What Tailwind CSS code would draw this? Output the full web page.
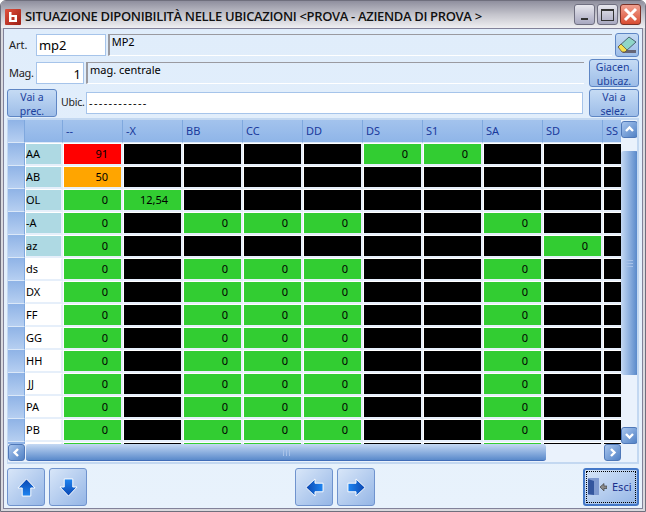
<!DOCTYPE html>
<html><head><meta charset="utf-8"><title>Situazione</title>
<script src="https://cdn.jsdelivr.net/npm/@tailwindcss/browser@4"></script></head>
<body class="m-0 overflow-hidden bg-white">
<div class="w-[646px] h-[512px] flex flex-col bg-[#d9d9de] font-['Noto_Sans',sans-serif] text-[11px] text-black rounded-t-[6px] overflow-hidden border border-[#6f6f7d]">
  <!-- title bar -->
  <div class="h-[27px] shrink-0 flex items-center pl-[4px] pr-[3px] pt-[4px] bg-gradient-to-b from-[#8f8f9e] via-[#c4c4cc] to-[#efeff2]">
    <div class="w-[16px] h-[16px] rounded-[1px] bg-gradient-to-br from-[#e2503c] to-[#9c1c14] flex items-center justify-center shrink-0">
      <svg width="12" height="12" viewBox="0 0 12 12"><path d="M2 1h2.500v3H10v7H2z M4.500 6v3h3V6z" fill="#fff" fill-rule="evenodd"/></svg>
    </div>
    <div class="ml-[4px] font-['Open_Sans',sans-serif] font-semibold text-[13px] tracking-[-0.34px] text-[#111] whitespace-nowrap flex-1">SITUAZIONE DIPONIBILITÀ NELLE UBICAZIONI &lt;PROVA - AZIENDA DI PROVA &gt;</div>
    <div class="flex gap-[2px] mr-[1px] -mt-[4px]">
      <div class="w-[21px] h-[21px] rounded-[3px] border border-[#6f6f80] bg-gradient-to-b from-[#e8e8ee] to-[#a8a8c0] flex items-end justify-center pb-[4px]"><div class="w-[7px] h-[2px] bg-[#333]"></div></div>
      <div class="w-[21px] h-[21px] rounded-[3px] border border-[#6f6f80] bg-gradient-to-b from-[#e8e8ee] to-[#a8a8c0] flex items-center justify-center"><div class="w-[13px] h-[12px] border border-t-2 border-[#333]"></div></div>
      <div class="w-[21px] h-[21px] rounded-[3px] border border-[#7a3228] bg-gradient-to-b from-[#f0a090] to-[#d84a30] flex items-center justify-center">
        <svg width="15" height="15" viewBox="0 0 15 15"><path d="M2 2l11 11M13 2L2 13" stroke="#fff" stroke-width="3"/></svg>
      </div>
    </div>
  </div>
  <!-- client -->
  <div class="flex-1 mx-[2px] mb-[2px] border border-[#82829a] bg-gradient-to-b from-[#e0edfb] to-[#e8f2fc] flex flex-col pl-[3px] pr-[3px] min-h-0">
    <div class="h-[29px] shrink-0 flex items-center pt-[2px]">
      <span class="w-[29px] pl-[2px] text-[#222] mt-[2px]">Art.</span>
      <div class="w-[70px] h-[22px] bg-white border border-[#a6c4ea] text-[13px] pl-[2px] leading-[20px]">mp2</div>
      <div class="w-[506px] ml-[2px] h-[22px] border-l-2 border-t border-[#9a9aa0] border-b border-b-white pl-[2px] leading-[14px]">MP2</div>
      <button class="ml-[3px] w-[24px] h-[24px] rounded-[3px] border border-[#5e86c4] bg-gradient-to-b from-[#c5dbf4] to-[#9dbde8] flex items-center justify-center">
        <svg width="20" height="20" viewBox="0 0 20 20"><path d="M4 15h15v3H6z" fill="#667"/><path d="M1 12L12 2l7 5L9 16z" fill="#8fd6c8" stroke="#234" stroke-width=".7"/><path d="M1 12l3-3 6 6-2 2H5z" fill="#f4e050" stroke="#543" stroke-width=".7"/></svg>
      </button>
    </div>
    <div class="h-[30px] shrink-0 flex items-center">
      <span class="w-[29px] text-[#222] pl-[2px] tracking-[-0.3px]">Mag.</span>
      <div class="w-[48px] h-[22px] bg-white border border-[#a6c4ea] text-[13px] pr-[2px] text-right leading-[22px]">1</div>
      <div class="w-[498px] ml-[2px] h-[22px] border-l-2 border-t border-[#9a9aa0] border-b border-b-white pl-[2px] leading-[14px]">mag. centrale</div>
      <button class="ml-[5px] w-[50px] h-[28px] rounded-[3px] border border-[#5e86c4] bg-gradient-to-b from-[#c5dbf4] to-[#9dbde8] text-[#1c3f9c] text-[10.5px] leading-[14px]">Giacen.<br>ubicaz.</button>
    </div>
    <div class="h-[30px] shrink-0 flex items-center">
      <button class="w-[50px] h-[28px] rounded-[3px] border border-[#5e86c4] bg-gradient-to-b from-[#c5dbf4] to-[#9dbde8] text-[#1c3f9c] text-[10.5px] leading-[14px]">Vai a<br>prec.</button>
      <span class="w-[29px] pl-[4px] text-[#222] text-[10.5px] tracking-[-0.2px]">Ubic.</span>
      <div class="w-[497px] h-[22px] bg-white border border-[#a6c4ea] pl-[2px] leading-[20px] tracking-[1.35px]">------------</div>
      <button class="ml-[6px] w-[50px] h-[28px] rounded-[3px] border border-[#5e86c4] bg-gradient-to-b from-[#c5dbf4] to-[#9dbde8] text-[#1c3f9c] text-[10.5px] leading-[14px]">Vai a<br>selez.</button>
    </div>
    <!-- grid -->
    <div class="h-[346px] w-[632px] shrink-0 border-2 border-[#c3d8f1] border-l-[1px] border-r-[2px] flex bg-[#eaf2fc] overflow-hidden">
      <div class="w-[613px] shrink-0 flex flex-col">
        <div class="h-[324px] shrink-0 overflow-hidden flex">
          <!-- indicator column -->
          <div class="w-[17px] shrink-0 flex flex-col [&>div]:h-[23px] [&>div]:shrink-0 [&>div]:border-r [&>div]:border-b [&>div]:border-r-[#7fa8de] [&>div]:border-b-[#dbe8f8] [&>div]:bg-gradient-to-b [&>div]:from-[#8fb3e6] [&>div]:to-[#b6cff1]">
            <div></div><div></div><div></div><div></div><div></div><div></div><div></div><div></div><div></div><div></div><div></div><div></div><div></div><div></div><div></div>
          </div>
          <div class="w-[638px] shrink-0">
            <!-- header -->
            <div class="grid grid-cols-[38px_repeat(10,60px)] h-[23px] leading-[22px] text-[#1a3a9c] [&>div]:border-r [&>div]:border-r-[#7fa8de] [&>div]:border-b [&>div]:border-b-[#dbe8f8] [&>div]:pl-[3px] [&>div]:bg-gradient-to-b [&>div]:from-[#a3c3ed] [&>div]:to-[#8fb5e8]">
              <div></div><div>--</div><div>-X</div><div>BB</div><div>CC</div><div>DD</div><div>DS</div><div>S1</div><div>SA</div><div>SD</div><div>SS</div>
            </div>
            <!-- rows -->
            <div class="grid grid-cols-[38px_repeat(10,60px)] auto-rows-[23px] leading-[20px] [&>div]:border-t [&>div]:border-l [&>div]:border-t-white [&>div]:border-l-white [&>div]:border-r-2 [&>div]:border-b-2 [&>div]:border-r-[#e6effa] [&>div]:border-b-[#e6effa] [&>div]:text-right [&>div]:pr-[13px]">
              <div class="bg-[#aed9e3] !text-left !pr-0">AA</div><div class="bg-[#ff0000]">91</div><div class="bg-black"></div><div class="bg-black"></div><div class="bg-black"></div><div class="bg-black"></div><div class="bg-[#32cd32]">0</div><div class="bg-[#32cd32]">0</div><div class="bg-black"></div><div class="bg-black"></div><div class="bg-black"></div>
              <div class="bg-[#aed9e3] !text-left !pr-0">AB</div><div class="bg-[#ffa500]">50</div><div class="bg-black"></div><div class="bg-black"></div><div class="bg-black"></div><div class="bg-black"></div><div class="bg-black"></div><div class="bg-black"></div><div class="bg-black"></div><div class="bg-black"></div><div class="bg-black"></div>
              <div class="bg-[#aed9e3] !text-left !pr-0">OL</div><div class="bg-[#32cd32]">0</div><div class="bg-[#32cd32]">12,54</div><div class="bg-black"></div><div class="bg-black"></div><div class="bg-black"></div><div class="bg-black"></div><div class="bg-black"></div><div class="bg-black"></div><div class="bg-black"></div><div class="bg-black"></div>
              <div class="bg-[#aed9e3] !text-left !pr-0">-A</div><div class="bg-[#32cd32]">0</div><div class="bg-black"></div><div class="bg-[#32cd32]">0</div><div class="bg-[#32cd32]">0</div><div class="bg-[#32cd32]">0</div><div class="bg-black"></div><div class="bg-black"></div><div class="bg-[#32cd32]">0</div><div class="bg-black"></div><div class="bg-black"></div>
              <div class="bg-[#aed9e3] !text-left !pr-0">az</div><div class="bg-[#32cd32]">0</div><div class="bg-black"></div><div class="bg-black"></div><div class="bg-black"></div><div class="bg-black"></div><div class="bg-black"></div><div class="bg-black"></div><div class="bg-black"></div><div class="bg-[#32cd32]">0</div><div class="bg-black"></div>
              <div class="bg-white !text-left !pr-0">ds</div><div class="bg-[#32cd32]">0</div><div class="bg-black"></div><div class="bg-[#32cd32]">0</div><div class="bg-[#32cd32]">0</div><div class="bg-[#32cd32]">0</div><div class="bg-black"></div><div class="bg-black"></div><div class="bg-[#32cd32]">0</div><div class="bg-black"></div><div class="bg-black"></div>
              <div class="bg-white !text-left !pr-0">DX</div><div class="bg-[#32cd32]">0</div><div class="bg-black"></div><div class="bg-[#32cd32]">0</div><div class="bg-[#32cd32]">0</div><div class="bg-[#32cd32]">0</div><div class="bg-black"></div><div class="bg-black"></div><div class="bg-[#32cd32]">0</div><div class="bg-black"></div><div class="bg-black"></div>
              <div class="bg-white !text-left !pr-0">FF</div><div class="bg-[#32cd32]">0</div><div class="bg-black"></div><div class="bg-[#32cd32]">0</div><div class="bg-[#32cd32]">0</div><div class="bg-[#32cd32]">0</div><div class="bg-black"></div><div class="bg-black"></div><div class="bg-[#32cd32]">0</div><div class="bg-black"></div><div class="bg-black"></div>
              <div class="bg-white !text-left !pr-0">GG</div><div class="bg-[#32cd32]">0</div><div class="bg-black"></div><div class="bg-[#32cd32]">0</div><div class="bg-[#32cd32]">0</div><div class="bg-[#32cd32]">0</div><div class="bg-black"></div><div class="bg-black"></div><div class="bg-[#32cd32]">0</div><div class="bg-black"></div><div class="bg-black"></div>
              <div class="bg-white !text-left !pr-0">HH</div><div class="bg-[#32cd32]">0</div><div class="bg-black"></div><div class="bg-[#32cd32]">0</div><div class="bg-[#32cd32]">0</div><div class="bg-[#32cd32]">0</div><div class="bg-black"></div><div class="bg-black"></div><div class="bg-[#32cd32]">0</div><div class="bg-black"></div><div class="bg-black"></div>
              <div class="bg-white !text-left !pr-0 pl-[2px]">JJ</div><div class="bg-[#32cd32]">0</div><div class="bg-black"></div><div class="bg-[#32cd32]">0</div><div class="bg-[#32cd32]">0</div><div class="bg-[#32cd32]">0</div><div class="bg-black"></div><div class="bg-black"></div><div class="bg-[#32cd32]">0</div><div class="bg-black"></div><div class="bg-black"></div>
              <div class="bg-white !text-left !pr-0">PA</div><div class="bg-[#32cd32]">0</div><div class="bg-black"></div><div class="bg-[#32cd32]">0</div><div class="bg-[#32cd32]">0</div><div class="bg-[#32cd32]">0</div><div class="bg-black"></div><div class="bg-black"></div><div class="bg-[#32cd32]">0</div><div class="bg-black"></div><div class="bg-black"></div>
              <div class="bg-white !text-left !pr-0">PB</div><div class="bg-[#32cd32]">0</div><div class="bg-black"></div><div class="bg-[#32cd32]">0</div><div class="bg-[#32cd32]">0</div><div class="bg-[#32cd32]">0</div><div class="bg-black"></div><div class="bg-black"></div><div class="bg-[#32cd32]">0</div><div class="bg-black"></div><div class="bg-black"></div>
              <div class="bg-white !text-left !pr-0"></div><div class="bg-[#32cd32]"></div><div class="bg-black"></div><div class="bg-[#32cd32]"></div><div class="bg-[#32cd32]"></div><div class="bg-[#32cd32]"></div><div class="bg-black"></div><div class="bg-black"></div><div class="bg-[#32cd32]"></div><div class="bg-black"></div><div class="bg-black"></div>
            </div>
          </div>
        </div>
        <!-- horizontal scrollbar -->
        <div class="h-[17px] shrink-0 flex">
          <div class="w-[17px] h-[17px] rounded-[3px] border border-[#4f78b8] bg-gradient-to-br from-[#a9c6ee] to-[#4f80c4] flex items-center justify-center shrink-0">
            <svg width="9" height="9" viewBox="0 0 9 9"><path d="M6 1L2.500 4.500 6 8" fill="none" stroke="#fff" stroke-width="2.4"/></svg>
          </div>
          <div class="w-[520px] ml-[1px] h-[17px] rounded-[3px] border-b border-[#3f6cb8] bg-gradient-to-b from-[#c5d9f3] to-[#5a8acb] flex items-center justify-center shrink-0">
            <div class="w-[7px] h-[7px] border-x border-[#a8c2e8] flex justify-center"><div class="w-[1px] h-[7px] bg-[#a8c2e8]"></div></div>
          </div>
          <div class="flex-1"></div>
          <div class="w-[17px] h-[17px] rounded-[3px] border border-[#4f78b8] bg-gradient-to-br from-[#a9c6ee] to-[#4f80c4] flex items-center justify-center shrink-0">
            <svg width="9" height="9" viewBox="0 0 9 9"><path d="M3 1l3.500 3.500L3 8" fill="none" stroke="#fff" stroke-width="2.4"/></svg>
          </div>
        </div>
      </div>
      <!-- vertical scrollbar -->
      <div class="w-[17px] h-[324px] shrink-0 flex flex-col pt-[1px]">
        <div class="h-[17px] rounded-[3px] border border-[#4f78b8] bg-gradient-to-br from-[#a9c6ee] to-[#4f80c4] flex items-center justify-center shrink-0">
          <svg width="9" height="9" viewBox="0 0 9 9"><path d="M1 6l3.500-3.500L8 6" fill="none" stroke="#fff" stroke-width="2.4"/></svg>
        </div>
        <div class="h-[224px] mt-[13px] rounded-[3px] border-r border-[#3f6cb8] bg-gradient-to-r from-[#c5d9f3] to-[#5a8acb] flex items-center justify-center shrink-0">
          <div class="w-[7px] h-[7px] border-y border-[#a8c2e8] flex items-center"><div class="w-[7px] h-[1px] bg-[#a8c2e8]"></div></div>
        </div>
        <div class="flex-1"></div>
        <div class="h-[17px] rounded-[3px] border border-[#4f78b8] bg-gradient-to-br from-[#a9c6ee] to-[#4f80c4] flex items-center justify-center shrink-0">
          <svg width="9" height="9" viewBox="0 0 9 9"><path d="M1 3l3.500 3.500L8 3" fill="none" stroke="#fff" stroke-width="2.4"/></svg>
        </div>
      </div>
    </div>
    <!-- bottom buttons -->
    <div class="flex items-start pt-[4px] w-[632px]">
      <button class="w-[38px] h-[38px] rounded-[3px] border border-[#6f93ce] bg-gradient-to-br from-[#d8e6f8] to-[#95b6e6] flex items-center justify-center">
        <svg width="19" height="19" viewBox="0 0 20 20"><defs><linearGradient id="au" x1="0" y1="0" x2="0" y2="1"><stop offset="0" stop-color="#0a45b0"/><stop offset="1" stop-color="#1f86f2"/></linearGradient></defs><path d="M10 1l9 9.500h-4.500V19h-9v-8.500H1z" fill="url(#au)" stroke="#fff"/></svg>
      </button>
      <button class="ml-[4px] w-[38px] h-[38px] rounded-[3px] border border-[#6f93ce] bg-gradient-to-br from-[#d8e6f8] to-[#95b6e6] flex items-center justify-center">
        <svg width="19" height="19" viewBox="0 0 20 20"><defs><linearGradient id="ad" x1="0" y1="0" x2="0" y2="1"><stop offset="0" stop-color="#1f86f2"/><stop offset="1" stop-color="#0a45b0"/></linearGradient></defs><path d="M10 19l9-9.500h-4.500V1h-9v8.500H1z" fill="url(#ad)" stroke="#fff"/></svg>
      </button>
      <button class="ml-[208px] w-[38px] h-[38px] rounded-[3px] border border-[#6f93ce] bg-gradient-to-br from-[#d8e6f8] to-[#95b6e6] flex items-center justify-center">
        <svg width="19" height="19" viewBox="0 0 20 20"><defs><linearGradient id="al" x1="0" y1="0" x2="1" y2="0"><stop offset="0" stop-color="#0a45b0"/><stop offset="1" stop-color="#1f86f2"/></linearGradient></defs><path d="M1 10l9.500-9v4.500H19v9h-8.500V19z" fill="url(#al)" stroke="#fff"/></svg>
      </button>
      <button class="ml-[4px] w-[38px] h-[38px] rounded-[3px] border border-[#6f93ce] bg-gradient-to-br from-[#d8e6f8] to-[#95b6e6] flex items-center justify-center">
        <svg width="19" height="19" viewBox="0 0 20 20"><defs><linearGradient id="ar" x1="0" y1="0" x2="1" y2="0"><stop offset="0" stop-color="#1f86f2"/><stop offset="1" stop-color="#0a45b0"/></linearGradient></defs><path d="M19 10L9.500 1v4.500H1v9h8.500V19z" fill="url(#ar)" stroke="#fff"/></svg>
      </button>
      <button class="ml-auto w-[56px] h-[38px] rounded-[3px] border-2 border-[#4478c8] bg-gradient-to-br from-[#d8e6f8] to-[#95b6e6] p-[1px]">
        <div class="w-full h-full border border-dotted border-black flex items-center pl-[1px]">
          <svg width="19" height="18" viewBox="0 0 19 18" class="shrink-0"><path d="M0 0h11v17H0z" fill="#7f9ad0"/><path d="M0 1l6 2v14l-6-1z" fill="#34569e"/><path d="M12 9l4-3.500V8h3v2.500h-3V13z" fill="#8a8a8a" stroke="#333" stroke-width=".6"/></svg>
          <span class="ml-[5px] text-[11px] text-[#1a2f8c]">Esci</span>
        </div>
      </button>
    </div>
  </div>
</div>
</body></html>
